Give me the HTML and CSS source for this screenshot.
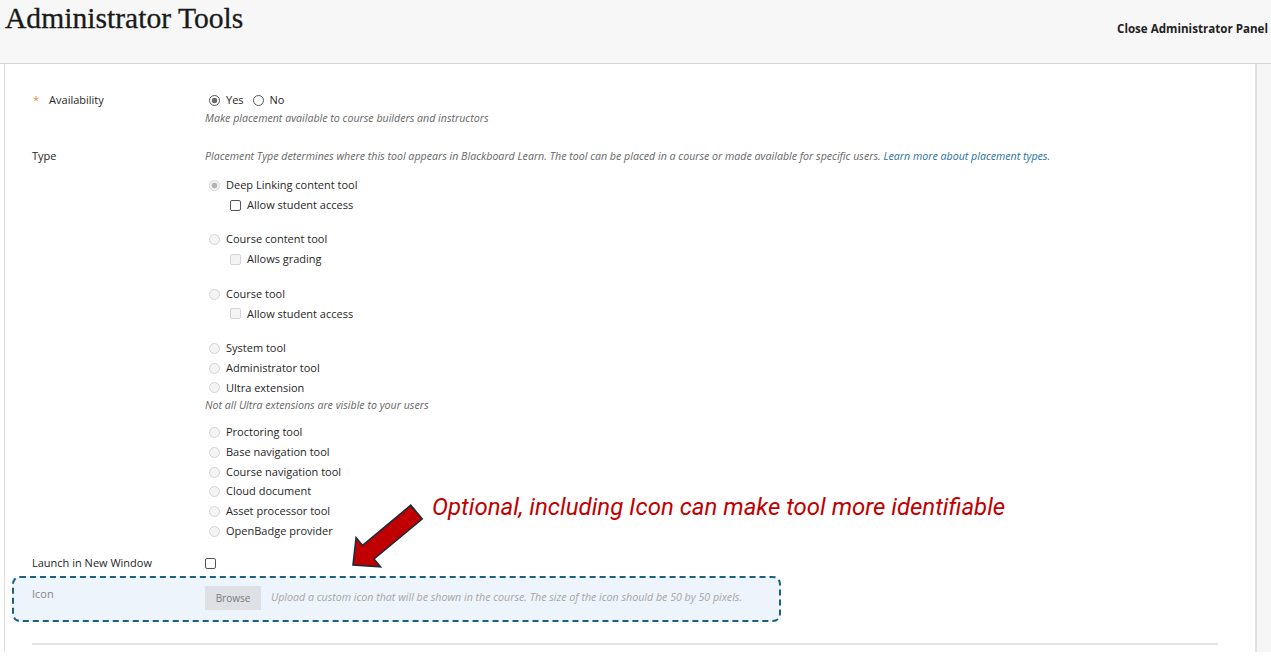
FILE: index.html
```html
<!DOCTYPE html>
<html lang="en">
<head>
  <meta charset="UTF-8" />
  <title>Administrator Tools</title>
  <link rel="stylesheet" href="styles.css">
</head>
<body>
  <header class="top">
    <h1>Administrator Tools</h1>
    <a class="close-link" href="#">Close Administrator Panel</a>
  </header>

  <main class="page">
    <div class="panel">
      <div class="row avail">
        <div class="label"><span class="req">*</span>Availability</div>
        <div class="field">
          <div class="inline">
            <label><input type="radio" name="avail" class="dark" checked /> Yes</label>
            <label><input type="radio" name="avail" class="dark" /> No</label>
          </div>
          <p class="hint">Make placement available to course builders and instructors</p>
        </div>
      </div>

      <div class="row type">
        <div class="label">Type</div>
        <div class="field">
          <p class="hint">Placement Type determines where this tool appears in Blackboard Learn. The tool can be placed in a course or made available for specific users. <a href="#">Learn more about placement types.</a></p>

          <div class="group first">
            <label class="opt"><input type="radio" name="type" checked disabled /> Deep Linking content tool</label>
            <label class="sub"><input type="checkbox" class="dark" /> Allow student access</label>
          </div>
          <div class="group">
            <label class="opt"><input type="radio" name="type" disabled /> Course content tool</label>
            <label class="sub"><input type="checkbox" disabled /> Allows grading</label>
          </div>
          <div class="group">
            <label class="opt"><input type="radio" name="type" disabled /> Course tool</label>
            <label class="sub"><input type="checkbox" disabled /> Allow student access</label>
          </div>
          <div class="group">
            <label class="opt"><input type="radio" name="type" disabled /> System tool</label>
            <label class="opt"><input type="radio" name="type" disabled /> Administrator tool</label>
            <label class="opt"><input type="radio" name="type" disabled /> Ultra extension</label>
            <p class="hint">Not all Ultra extensions are visible to your users</p>
          </div>
          <div class="group tight">
            <label class="opt"><input type="radio" name="type" disabled /> Proctoring tool</label>
            <label class="opt"><input type="radio" name="type" disabled /> Base navigation tool</label>
            <label class="opt"><input type="radio" name="type" disabled /> Course navigation tool</label>
            <label class="opt"><input type="radio" name="type" disabled /> Cloud document</label>
            <label class="opt"><input type="radio" name="type" disabled /> Asset processor tool</label>
            <label class="opt"><input type="radio" name="type" disabled /> OpenBadge provider</label>
          </div>
        </div>
      </div>

      <div class="row launch">
        <div class="label">Launch in New Window</div>
        <div class="field"><input type="checkbox" class="dark" /></div>
      </div>

      <div class="row icon-row">
        <div class="label">Icon</div>
        <div class="field inline">
          <button class="browse">Browse</button>
          <span class="hint light">Upload a custom icon that will be shown in the course. The size of the icon should be 50 by 50 pixels.</span>
        </div>
      </div>

      <hr class="rule" />
    </div>
    <div class="side"></div>
  </main>

  <!-- annotation layer -->
  <p class="note">Optional, including Icon can make tool more identifiable</p>
  <svg class="arrow" width="1271" height="662" viewBox="0 0 1271 662">
    <polygon points="410.8,505.2 422.2,518.8 374,559 380.5,566.8 353,565 356.1,537.6 362.6,545.4"
      fill="#c00000" stroke="#1c2b39" stroke-width="1.6" stroke-linejoin="miter" />
  </svg>
</body>
</html>
```

FILE: styles.css
```css
body {
  margin: 0;
  font-family: "Open Sans", "Noto Sans", sans-serif;
  font-size: 11px;
  color: #262626;
  background: #fff;
}
.top {
  display: flex;
  justify-content: space-between;
  align-items: flex-start;
  height: 63px;
  background-color: #f7f7f7;
  border-bottom: 1px solid #d6d6d6;
}
.top h1 {
  margin: 0;
  padding: 2px 5px;
  font-family: "Liberation Serif", "DejaVu Serif", serif;
  font-weight: normal;
  font-size: 29.6px;
  color: #1a1a1a;
  -webkit-text-stroke: 0.3px #1a1a1a;
}
.close-link {
  margin-top: 21px;
  padding-right: 3px;
  font-size: 11.6px;
  font-weight: bold;
  color: #222;
  text-decoration: none;
}
.page {
  display: flex;
  height: 588px;
  margin-left: 4px;
}
.panel {
  flex: 1;
  overflow: hidden;
  border-left: 1px solid #dedede;
  border-right: 2px solid #e2e2e2;
  padding: 0 37px 0 27px;
}
.side {
  width: 14px;
  background-color: #f6f6f6;
}
p {
  margin: 0;
}
.hint {
  font-style: italic;
  color: #666;
  line-height: 16px;
  font-size: 10.65px;
}
.hint a {
  color: #1f6fa0;
  text-decoration: none;
}
.hint.light {
  color: #a6a6a6;
}
.row {
  display: flex;
}
.label {
  width: 173px;
  flex-shrink: 0;
  line-height: 20px;
}
.field {
  flex: 1;
}
.req {
  color: #f08a2c;
  margin: 0 10px 0 1px;
}
.avail {
  margin-top: 26px;
}
.inline {
  display: flex;
  align-items: center;
  line-height: 20px;
}
.inline label {
  display: flex;
  align-items: center;
  margin-right: 5px;
}
.type {
  margin-top: 22px;
}
.type .label {
  line-height: 16px;
}
.group {
  margin-top: 15px;
}
.group.first {
  margin-top: 11px;
}
.group.tight {
  margin-top: 9px;
}
.opt,
.sub {
  display: flex;
  align-items: center;
  line-height: 19.7px;
}
.group .hint {
  line-height: 16px;
}
.sub {
  padding-left: 25px;
}

input[type="radio"],
input[type="checkbox"] {
  appearance: none;
  -webkit-appearance: none;
  margin: 1px 6px 0 4px;
  width: 11px;
  height: 11px;
  border: 1px solid #d4d4d4;
  background: #f4f4f4;
  box-sizing: border-box;
}
input[type="radio"] {
  border-radius: 50%;
}
input[type="checkbox"] {
  border-radius: 2px;
}
input[type="radio"]:checked {
  background: radial-gradient(circle, #b4b4b4 0 2.6px, #f4f4f4 3.2px);
}
input.dark {
  border-color: #555;
  background: #fff;
}
input[type="radio"].dark:checked {
  background: radial-gradient(circle, #6b6b6b 0 2.5px, #fff 3.1px);
}
.sub input {
  margin-left: 0;
}

.launch {
  margin-top: 12px;
}
.launch .field input {
  margin: 5px 0 0 0;
}
.icon-row {
  margin: 3px 0 0 -20px;
  width: 769px;
  height: 46px;
  box-sizing: border-box;
  padding: 8px 0 0 18px;
  border: 2px dashed #1d5f7d;
  border-radius: 8px;
  background-color: #eef4fb;
}
.icon-row .label {
  color: #888;
  line-height: 16px;
}
.icon-row .field {
  align-items: flex-start;
}
.browse {
  width: 56px;
  height: 24px;
  margin-right: 10px;
  border: none;
  background-color: #dde1e6;
  color: #7a7a7a;
  font-family: inherit;
  font-size: 10px;
}
.icon-row .hint {
  line-height: 22px;
}
.rule {
  margin: 21px 0 0 0;
  border: none;
  border-top: 2px solid #e4e4e4;
}

.note {
  position: absolute;
  left: 432px;
  top: 493px;
  margin: 0;
  font-family: Roboto, "Noto Sans", sans-serif;
  font-style: italic;
  font-size: 24px;
  color: #c00000;
}
.arrow {
  position: absolute;
  left: 0;
  top: 0;
  pointer-events: none;
}
```
